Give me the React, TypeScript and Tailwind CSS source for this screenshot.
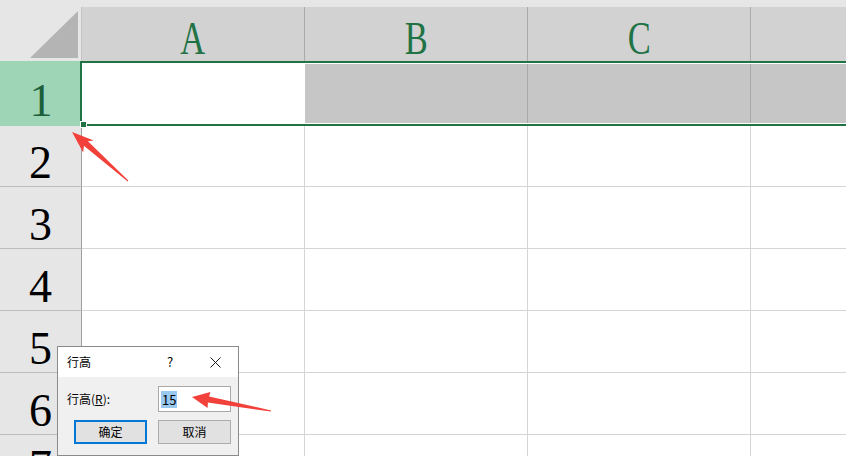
import { Fragment } from 'react';

const columns = ['A', 'B', 'C', ''];
const rows = [
  { n: 2, h: 'h-[61px]', up: '' },
  { n: 3, h: 'h-[62px]', up: '' },
  { n: 4, h: 'h-[62px]', up: '' },
  { n: 5, h: 'h-[62px]', up: '' },
  { n: 6, h: 'h-[62px]', up: '' },
  { n: 7, h: 'h-[62px]', up: 'pb-[6px]' },
];

const serif = "font-['Liberation_Serif','DejaVu_Serif',serif]";
const cjk = "font-['Noto_Sans_CJK_SC','Noto_Sans',sans-serif]";

const Arrows = () => (
  <svg className="absolute inset-0 pointer-events-none" width={846} height={456}>
    <polygon
      fill="#f2403b"
      points="72,132 83.2,152.5 83.9,145.8 127.7,181.4 128.3,180.6 87.9,141.3 93.8,140.5"
    />
    <polygon
      fill="#f2403b"
      points="192,397 207.6,407.9 207.9,402.5 270.9,411.6 271.1,410.4 209.1,396.6 210.4,392.1"
    />
  </svg>
);

const App = () => {
  return (
    <div className="relative w-[846px] h-[456px] overflow-hidden bg-white">
      <div className="h-[7px] bg-[#e6e6e6]" />

      {/* column headers */}
      <div className="flex h-[54px]">
        <div className="w-[82px] shrink-0 bg-[#e6e6e6] border-r border-[#c4c4c4]">
          <svg width={81} height={54}>
            <polygon points="30,51 78,51 78,4" fill="#b4b4b4" />
          </svg>
        </div>
        {columns.map((c, i) => (
          <div
            key={i}
            className={`w-[223px] shrink-0 bg-[#d2d2d2] border-r border-[#ababab] flex items-end justify-center leading-none text-[46px] text-[#217346] ${serif}`}
          >
            {c && <span className="inline-block scale-x-75 mb-[-1px]">{c}</span>}
          </div>
        ))}
      </div>

      {/* row 1, selected */}
      <div className="flex h-[65px]">
        <div
          className={`w-[82px] shrink-0 bg-[#9fd5b7] flex items-end justify-center leading-none text-[46px] text-[#1d5e3b] pb-[2px] ${serif}`}
        >
          1
        </div>
        <div className="w-[223px] shrink-0 bg-white" />
        {columns.slice(1).map((c, i) => (
          <div key={i} className="w-[223px] shrink-0 bg-white py-[3px]">
            <div className="h-full bg-[#c6c6c6] border-r border-[#a8a8a8]" />
          </div>
        ))}
      </div>

      {/* other rows */}
      {rows.map((r) => (
        <div key={r.n} className={`flex ${r.h}`}>
          <div
            className={`w-[82px] shrink-0 bg-[#e6e6e6] border-r border-r-[#9e9e9e] border-b border-b-[#bcbcbc] flex items-end justify-center leading-none text-[46px] text-black ${r.up} ${serif}`}
          >
            {r.n}
          </div>
          {columns.map((c, i) => (
            <Fragment key={i}>
              <div className="w-[223px] shrink-0 border-r border-b border-[#d4d4d4]" />
            </Fragment>
          ))}
        </div>
      ))}

      {/* selection frame + fill handle */}
      <div className="absolute left-[80px] top-[61px] w-[780px] h-[65px] border-2 border-[#217346]" />
      <div className="absolute left-[80px] top-[121px] w-[7px] h-[7px] bg-[#217346] border border-white" />

      {/* row height dialog */}
      <div
        className={`absolute left-[57px] top-[346px] w-[182px] h-[110px] border border-[#8a8a8a] bg-[#f0f0f0] text-[12px] text-black ${cjk}`}
      >
        <div className="h-[30px] bg-white flex items-center">
          <span className="w-[102px] pl-[9px]">行高</span>
          <span className="w-[20px] text-center text-[13px]">?</span>
          <span className="w-[15px]" />
          <span className="w-[40px] flex justify-center">
            <svg width={11} height={11} viewBox="0 0 11 11">
              <path d="M0.5 0.5 L10.5 10.5 M10.5 0.5 L0.5 10.5" stroke="#1a1a1a" strokeWidth={1} />
            </svg>
          </span>
        </div>
        <div className="flex items-center pl-[9px] pr-[7px] pt-[9px]">
          <span className="flex-1">
            行高(<span className="underline">R</span>):
          </span>
          <div className="w-[73px] h-[26px] border border-[#a9a9a9] bg-white flex items-center pl-[2px]">
            <span className="bg-[#99c9ef] px-[1px] leading-[17px] text-[13px]">15</span>
          </div>
        </div>
        <div className="flex gap-[11px] pl-[16px] pt-[8px]">
          <button className="w-[73px] h-[24px] border-2 border-[#0078d7] bg-[#e1e1e1] text-[12px]">
            确定
          </button>
          <button className="w-[73px] h-[24px] border border-[#adadad] bg-[#e1e1e1] text-[12px]">
            取消
          </button>
        </div>
      </div>

      <Arrows />
    </div>
  );
};

export default App;
